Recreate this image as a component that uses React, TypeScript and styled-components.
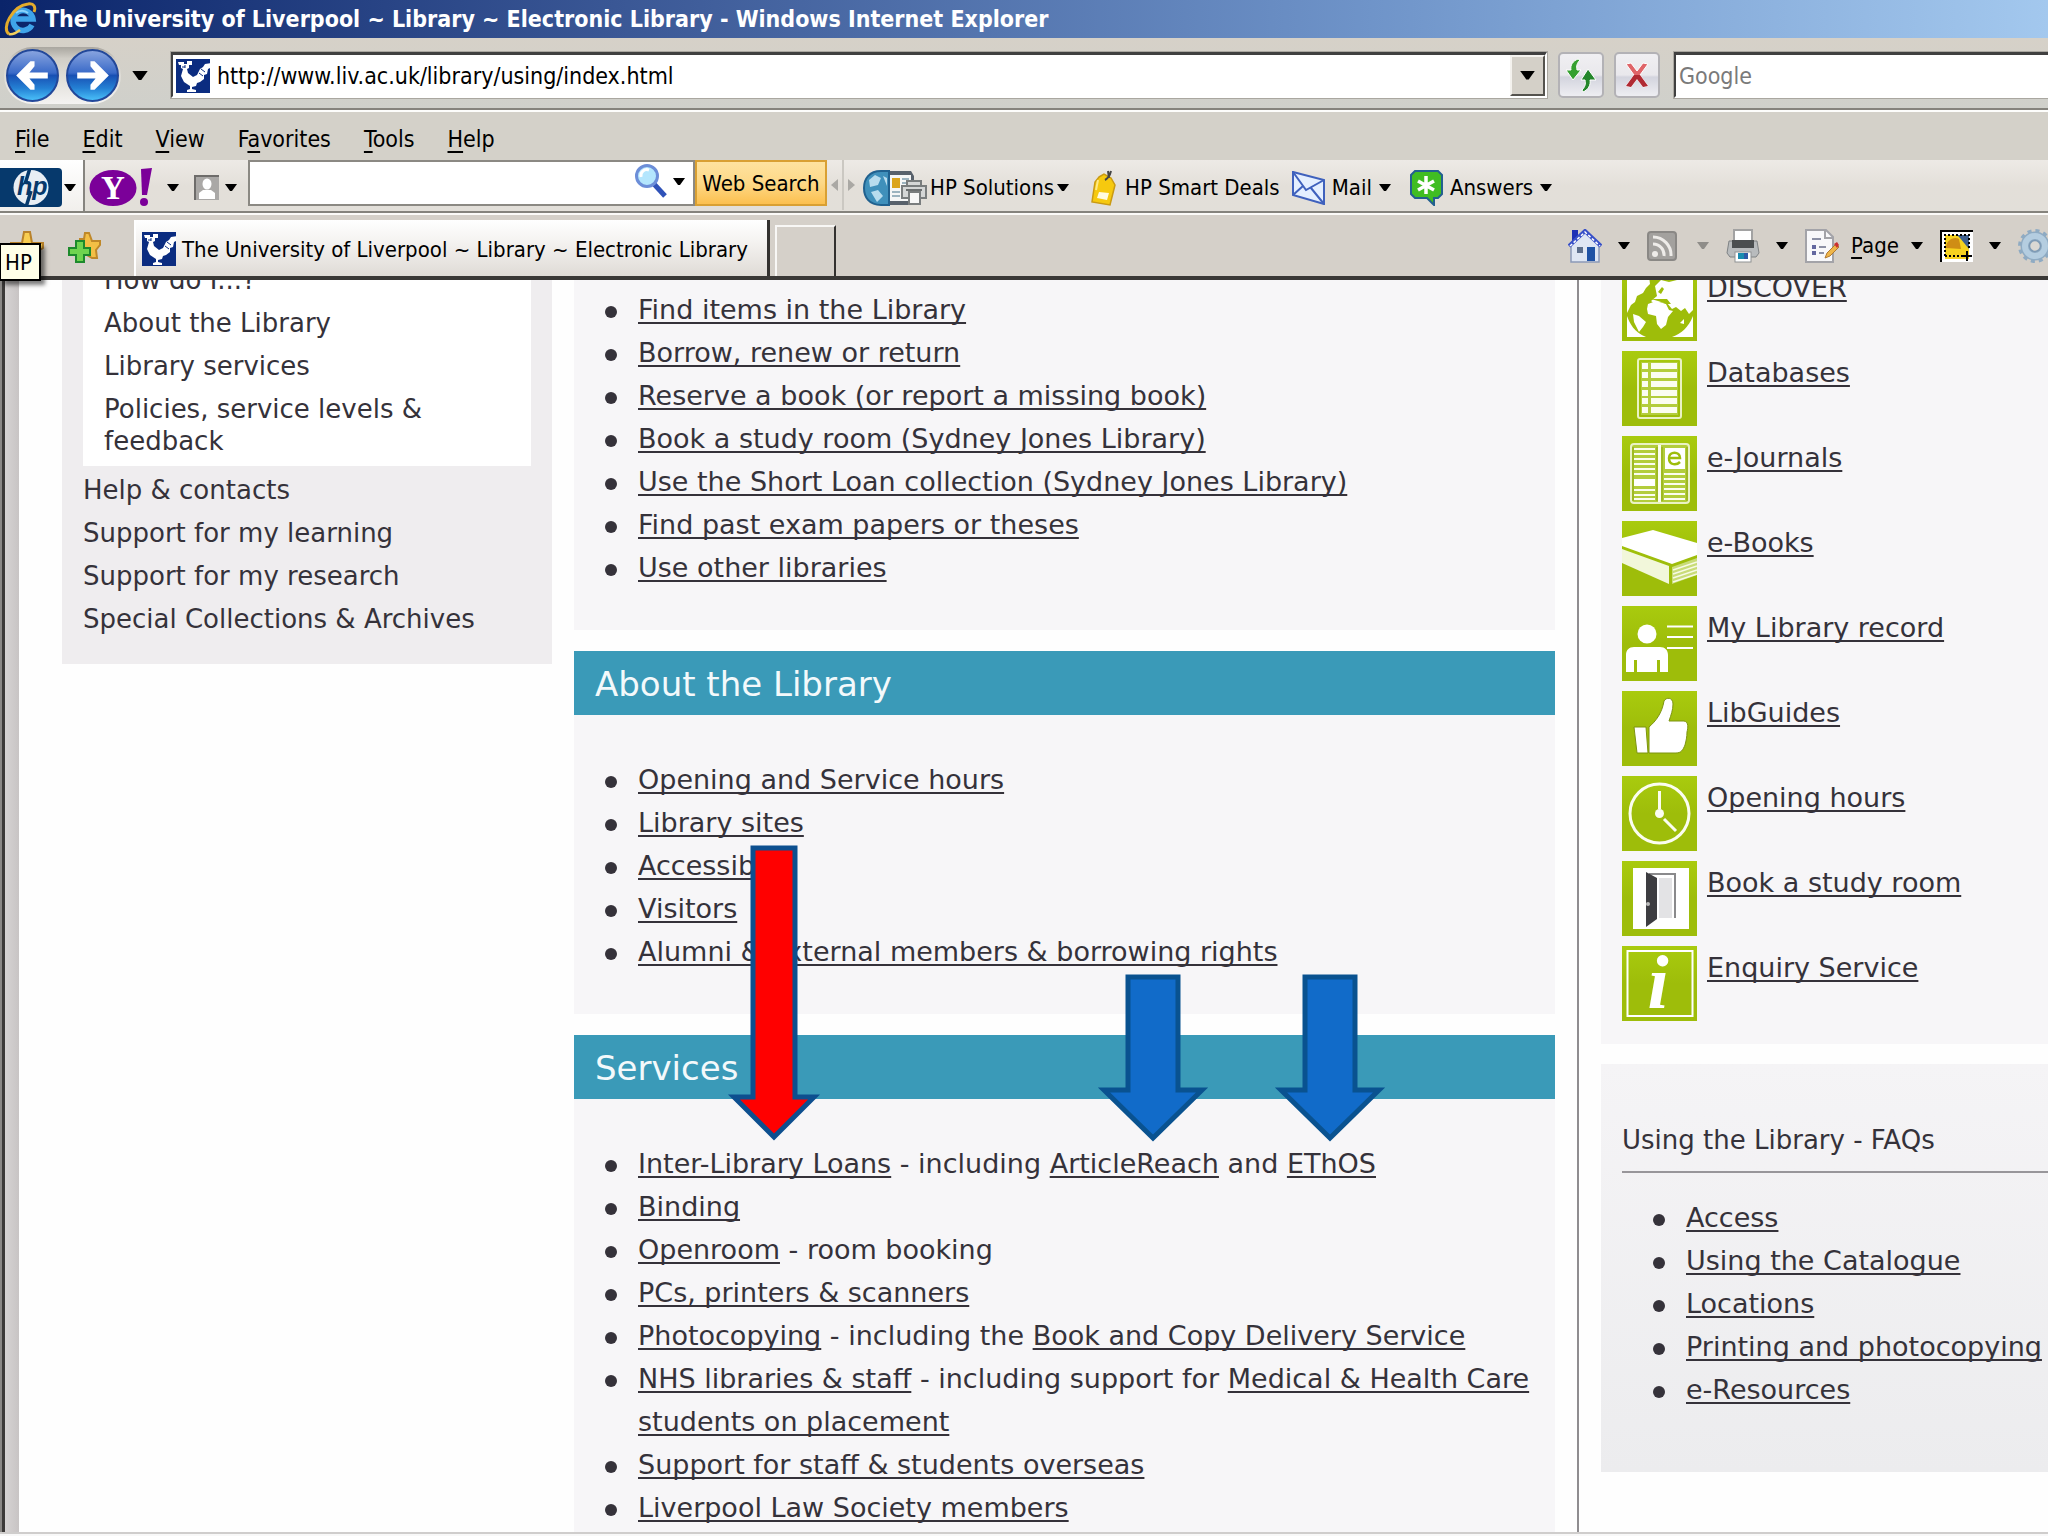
import React from "react";
import styled, { createGlobalStyle } from "styled-components";

const UI = '"DejaVu Sans Condensed", "DejaVu Sans", Tahoma, sans-serif';
const BODY = '"DejaVu Sans", Verdana, sans-serif';

const Global = createGlobalStyle`
  *, *::before, *::after { box-sizing: border-box; }
  body { margin: 0; background: #fff; font-family: ${UI}; color: #000; }
  button { font: inherit; color: inherit; background: none; border: 0; padding: 0; margin: 0; }
  ul { list-style: none; margin: 0; padding: 0; }
  svg { display: block; flex: none; }
`;

/* ---------- window chrome ---------- */

const Window = styled.div`
  position: relative;
  display: flex;
  flex-direction: column;
  height: 100vh;
  overflow: hidden;
`;

const TitleBar = styled.header`
  display: flex;
  align-items: center;
  gap: 7px;
  height: 38px;
  padding-left: 4px;
  background: linear-gradient(90deg, #0a246a, #3a5795 30%, #6f94c9 67%, #a3c8ee);
  color: #fff;
  white-space: nowrap;
`;

const Title = styled.h1`
  margin: 0;
  font-size: 23px;
  font-weight: 700;
`;

const AddressRow = styled.div`
  display: flex;
  align-items: center;
  height: 74px;
  padding-top: 2px;
  background: linear-gradient(#d6d1c8, #cfd0cb);
  border-bottom: 2px solid #fdfdfb;
  box-shadow: inset 0 -2px 0 #85837d;
`;

const NavButtons = styled.div`
  display: flex;
  align-items: center;
  gap: 7px;
  margin-left: 4px;
  padding: 2px;
  border-radius: 30px;
  background: linear-gradient(#a9a69f, #d0cdc6 20%, #d8d5ce 35%, #f4f3f1);
`;

const History = styled.button`
  display: flex;
  justify-content: center;
  width: 30px;
  margin: 0 16px 0 4px;
`;

const Field = styled.div<{ $grow?: boolean }>`
  display: flex;
  align-items: center;
  flex: ${p => (p.$grow ? "1 1 0" : "none")};
  gap: 7px;
  height: 46px;
  padding: 0 0 0 3px;
  background: #fff;
  border: 2px solid #404040;
  border-top-width: 3px;
  border-right-color: #fff;
  border-bottom-color: #fff;
  outline: 1px solid #aaa7a0;
`;

const TextInput = styled.input`
  flex: 1;
  min-width: 0;
  height: 100%;
  padding: 0;
  border: 0;
  outline: 0;
  background: transparent;
  font: 23px ${UI};
  color: #000;
  &::placeholder { color: #7a7a7a; opacity: 1; }
`;

const DropButton = styled.button`
  display: flex;
  align-items: center;
  justify-content: center;
  width: 35px;
  height: 100%;
  background: #d4d0c8;
  border: 2px solid;
  border-color: #f4f2ee #55534e #55534e #f4f2ee;
`;

const SquareButton = styled.button`
  display: flex;
  align-items: center;
  justify-content: center;
  width: 46px;
  height: 46px;
  border: 2px solid #b3b2b6;
  border-radius: 5px;
  background: linear-gradient(#f0eff2, #e9e8ec 50%, #d3d4de 55%, #eeeef2);
`;

const Commands = styled.div`
  display: flex;
  gap: 10px;
  padding: 0 14px 0 11px;
`;

const SearchField = styled(Field)`
  width: 374px;
  border-right: 0;
`;

const MenuBar = styled.nav`
  display: flex;
  align-items: center;
  gap: 33px;
  height: 48px;
  padding: 6px 0 0 15px;
  background: #d4d1c9;
  font-size: 23px;
  u { text-underline-offset: 4px; text-decoration-thickness: 2px; }
`;

const Toolbar = styled.div`
  display: flex;
  align-items: flex-start;
  height: 55px;
  background: linear-gradient(#edeae6, #e3dfd9 50%, #e2dfd9);
  border-bottom: 2px solid #fbfaf8;
  box-shadow: inset 0 -2px 0 #85837d;
  font-size: 22px;
`;

const ToolButton = styled.button<{ $gap: number }>`
  display: flex;
  align-items: center;
  gap: ${p => p.$gap}px;
  height: 52px;
  padding-top: 3px;
  white-space: nowrap;
`;

const HpSlot = styled.div`
  width: 85px;
  height: 51px;
  margin-right: 4px;
  background: linear-gradient(#fff, #f1efec);
  border-right: 2px solid #86847f;
`;

const YahooGroup = styled.div`
  display: flex;
  gap: 15px;
  margin-right: 11px;
`;

const ToolSearch = styled.div`
  display: flex;
  align-items: center;
  gap: 6px;
  width: 447px;
  height: 46px;
  padding: 0 8px 4px;
  background: #fff;
  border: 2px solid #8b8983;
`;

const WebSearch = styled.button`
  width: 132px;
  height: 46px;
  background: linear-gradient(#fee3a0, #fdd887 50%, #fcc04f);
  border: 2px solid #d9a033;
  white-space: nowrap;
`;

const Grip = styled.div`
  display: flex;
  align-items: center;
  gap: 4px;
  height: 50px;
  margin: 0 8px 0 4px;
`;

const GripLine = styled.span`
  width: 2px;
  height: 100%;
  background: #cbc8c2;
`;

const ToolLinks = styled.div<{ $gap: number }>`
  display: flex;
  gap: ${p => p.$gap}px;
  margin-right: 12px;
`;

const TabRow = styled.div`
  display: flex;
  align-items: flex-end;
  justify-content: space-between;
  height: 65px;
  background: #d5d0c9;
  border-bottom: 4px solid #3f3d3b;
  border-image: linear-gradient(#8a8884 25%, #3a3836 60%) 4;
  font-size: 22px;
`;

const TabSide = styled.div`
  display: flex;
  align-items: flex-end;
`;

const Favorites = styled.div`
  display: flex;
  align-self: center;
  gap: 24px;
  width: 134px;
  padding-left: 10px;
`;

const Tab = styled.button`
  display: flex;
  align-items: center;
  gap: 6px;
  height: 56px;
  width: 636px;
  padding: 2px 0 0 6px;
  background: linear-gradient(#fff, #f4f2f0 40%, #dfdbd6);
  border-right: 3px solid #33312f;
  border-left: 2px solid #fff;
  white-space: nowrap;
`;

const NewTab = styled.button`
  width: 61px;
  height: 51px;
  margin-left: 5px;
  border-right: 2px solid #33312f;
  border-left: 2px solid #f8f7f5;
  border-top: 2px solid #f8f7f5;
`;

const PageTools = styled.div`
  display: flex;
  align-items: center;
  align-self: center;
  gap: 17px;
  height: 44px;
  u { text-underline-offset: 4px; text-decoration-thickness: 2px; }
`;

const PageTool = styled.button<{ $w: number }>`
  display: flex;
  align-items: center;
  justify-content: space-between;
  width: ${p => p.$w}px;
`;

const Tip = styled.div`
  position: absolute;
  left: 0;
  top: 243px;
  z-index: 3;
  padding: 0 4px;
  height: 38px;
  width: 41px;
  line-height: 36px;
  font-size: 22px;
  background: #ffffe8;
  border: 2px solid #000;
  border-left-width: 1px;
  box-shadow: 4px 4px 4px rgba(0, 0, 0, 0.5);
`;

/* ---------- page ---------- */

const Viewport = styled.div`
  position: relative;
  flex: 1;
  min-height: 0;
  overflow: hidden;
  padding-left: 62px;
  background: linear-gradient(90deg, #8a8886 2px, #3c3a39 2px 5px, #d6d3d3 5px, #c8c4c4 19px, #fefefe 19px);
  color: #35323a;
  font-family: ${BODY};
  &::after {
    content: "";
    position: absolute;
    left: 0;
    right: 0;
    bottom: 0;
    height: 4px;
    background: linear-gradient(#cfcdcc 50%, #f8f8f8 50%);
  }
`;

const Columns = styled.div`
  display: grid;
  grid-template-columns: 490fr 981fr 471fr;
  align-items: start;
  gap: 22px;
`;

const SideNav = styled.nav`
  padding: 0 21px 29px;
  background: #efedef;
  font-size: 26px;
  line-height: 32px;
`;

const NavList = styled.ul`
  display: flex;
  flex-direction: column;
  gap: 11px;
`;

const SubNav = styled(NavList)`
  margin-top: -16px;
  margin-bottom: 8px;
  padding: 0 21px 9px;
  background: #fff;
`;

const NavLink = styled.a`
  color: inherit;
  text-decoration: none;
`;

const Main = styled.main`
  display: flex;
  flex-direction: column;
  gap: 21px;
`;

const Heading = styled.h2`
  margin: 0;
  height: 64px;
  padding-left: 21px;
  line-height: 66px;
  font-size: 34px;
  font-weight: 400;
  color: #f3f9fb;
  background: #3a9ab8;
`;

const Bullets = styled.ul<{ $top: number }>`
  padding: ${p => p.$top}px 20px 41px 64px;
  background: #f7f6f8;
  font-size: 27px;
  line-height: 43px;
  li { position: relative; }
  li::before {
    content: "";
    position: absolute;
    left: -33px;
    top: 18px;
    width: 12px;
    height: 12px;
    border-radius: 50%;
    background: #35323a;
  }
`;

const Link = styled.a`
  color: inherit;
  text-decoration: underline;
  text-decoration-thickness: 2px;
  text-underline-offset: 3px;
  text-decoration-skip-ink: none;
`;

const CoveredLink = styled(Link)`
  display: inline-block;
  max-width: 150px;
  overflow: hidden;
  vertical-align: top;
`;

const Aside = styled.aside`
  display: flex;
  flex-direction: column;
  gap: 20px;
  height: 1256px;
  padding-left: 22px;
  border-left: 2px solid #8f8d90;
`;

const QuickLinks = styled.ul`
  display: flex;
  flex-direction: column;
  gap: 10px;
  margin-top: -14px;
  padding: 0 0 23px 21px;
  background: #f7f6f8;
  font-size: 27px;
  line-height: 43px;
  li { display: flex; gap: 10px; white-space: nowrap; }
`;

const Faq = styled.section`
  padding: 52px 0 44px 21px;
  background: linear-gradient(#f5f4f6, #ececee);
`;

const FaqTitle = styled.h3`
  margin: 0;
  height: 57px;
  line-height: 48px;
  font-size: 26px;
  font-weight: 400;
  border-bottom: 2px solid #98969a;
  white-space: nowrap;
`;

const FaqList = styled(Bullets)`
  padding-right: 0;
  padding-bottom: 17px;
  background: none;
  white-space: nowrap;
`;

const Callout = styled.svg<{ $x: number; $y: number }>`
  position: absolute;
  left: ${p => p.$x}px;
  top: ${p => p.$y}px;
  z-index: 2;
`;

/* ---------- icons ---------- */

const Caret = ({ c = "#000", w = 12 }: { c?: string; w?: number }) => (
  <svg width={w} height={w / 2 + 1} viewBox="0 0 12 7"><path d="M0 0H12L7 7H5Z" fill={c} /></svg>
);

const Crest = () => (
  <svg width="34" height="34" viewBox="0 0 34 34">
    <rect width="34" height="34" fill="#0b2c80" />
    <path d="M2 3h6v2h3V2h5v4h-3v3l-2 1 1 4 5 4 4-2 3-6 3-2 2-3 6-1-1 5-2 1-1 5-3 1v4l-4 3-3 1-1 3-4 1v2l4 1v2H11v-2l3-1v-3l-3-2-3-2-3-6 2-7-2-1V6H3z" fill="#fff" />
    <path d="M6 8h3M9 6v3M25 10l4 3M23 14l4 3" stroke="#0b2c80" strokeWidth="1" />
  </svg>
);

const Explorer = () => (
  <svg width="34" height="36" viewBox="0 0 34 36">
    <path d="M28 24A10 10 0 1 1 29 18H11" fill="none" stroke="#3fa4ea" strokeWidth="5.5" />
    <path d="M12 12a9 9 0 0 1 12 0" fill="none" stroke="#8ad2fa" strokeWidth="2" />
    <path d="M5 33C-3 28 8 5 24 3c6-1 8 3 6 8" fill="none" stroke="#e3ab2c" strokeWidth="3" />
    <path d="M5 33c3 1 7-1 11-4" fill="none" stroke="#f3cf5c" strokeWidth="2.5" />
  </svg>
);

const Round = ({ flip }: { flip?: boolean }) => (
  <svg width="53" height="53" viewBox="0 0 52 52">
    <defs>
      <linearGradient id="orb" x1="0" y1="0" x2="0" y2="1">
        <stop offset="0" stopColor="#8ba6e0" /><stop offset=".45" stopColor="#3a6ac8" />
        <stop offset=".5" stopColor="#1850b4" /><stop offset=".75" stopColor="#2480d4" /><stop offset="1" stopColor="#4cc4fb" />
      </linearGradient>
    </defs>
    <circle cx="26" cy="26" r="25" fill="url(#orb)" stroke="#23489a" strokeWidth="2" />
    <g transform={flip ? "matrix(-1 0 0 1 52 0)" : undefined}>
      <path d="M10 26L24 12h4v5l-5 6h18v6H23l5 6v5h-4Z" fill="#fff" />
    </g>
  </svg>
);

const Refresh = () => (
  <svg width="34" height="38" viewBox="0 0 34 38">
    <path d="M14 3C9 5 6 9 7 14H2l7 10 8-10h-4c-1-4 0-7 3-10z" fill="#35a02f" stroke="#fff" strokeWidth="1" />
    <path d="M19 36c5-2 8-7 7-12h6l-8-11-7 11h4c1 4 0 7-3 10z" fill="#23862a" stroke="#fff" strokeWidth="1" />
  </svg>
);

const Stop = () => (
  <svg width="30" height="34" viewBox="0 0 30 34">
    <path d="M4 6l5-1 6 8 6-8 5 1-8 11 8 11-5 1-6-8-6 8-5-1 8-11z" fill="#df6468" stroke="#fff" strokeWidth="1" />
    <path d="M12 17l-8 11 5 1 6-8 6 8 5-1-8-11z" fill="#b02a33" />
  </svg>
);

const HpLogo = () => (
  <svg width="62" height="39" viewBox="0 0 62 39">
    <rect x="-6" width="68" height="39" rx="4" fill="#06396c" />
    <circle cx="31" cy="19.500" r="17.500" fill="#e8eef4" />
    <text x="17" y="27" fontFamily="Liberation Sans, sans-serif" fontStyle="italic" fontWeight="700" fontSize="25" fill="#06396c">hp</text>
    <path d="M30 0L25 16M31 23l-5 16" stroke="#06396c" strokeWidth="3.500" />
  </svg>
);

const Yahoo = () => (
  <svg width="64" height="39" viewBox="0 0 64 39">
    <ellipse cx="24" cy="20" rx="23.500" ry="18" fill="#7b0099" />
    <text x="24" y="31" textAnchor="middle" fontFamily="Liberation Serif, serif" fontWeight="700" fontSize="33" fill="#fff">Y</text>
    <path d="M52 1l11-1-5 27h-5z" fill="#7b0099" /><circle cx="55" cy="34" r="4" fill="#7b0099" />
  </svg>
);

const Person = () => (
  <svg width="25" height="25" viewBox="0 0 25 25">
    <rect width="25" height="25" fill="#aaa8a6" /><path d="M1 25V1h24" fill="none" stroke="#6e6c6a" strokeWidth="2" />
    <ellipse cx="13" cy="9" rx="4.500" ry="5.500" fill="#fff" /><path d="M5 24v-6l4-3h8l4 3v6z" fill="#fff" />
  </svg>
);

const Magnifier = () => (
  <svg width="33" height="34" viewBox="0 0 33 34">
    <path d="M20 20l11 12" stroke="#2f52b8" strokeWidth="5" />
    <circle cx="13" cy="12" r="10.500" fill="#b4e6fd" stroke="#6c8ed8" strokeWidth="3" />
    <path d="M7 13a6 6 0 0 1 8-7" fill="none" stroke="#fff" strokeWidth="3" />
  </svg>
);

const Solutions = () => (
  <svg width="64" height="36" viewBox="0 0 64 36">
    <path d="M20 1h28l3 5v29H20z" fill="#58616b" />
    <path d="M18 1C6 1 1 9 1 18s5 17 17 17h8V1z" fill="#3f90bb" stroke="#20618f" strokeWidth="2" />
    <path d="M6 10l6-5 6 3-3 7-8 2zM8 22l7-2 5 6-6 6zM20 6l4 2v8z" fill="#b7dcee" />
    <rect x="27" y="5" width="21" height="26" fill="#f5f6f6" />
    <rect x="29" y="8" width="8" height="10" fill="#dba41c" />
    <path d="M39 9h7M39 13h7M29 22h8M29 26h8" stroke="#9bb3bf" strokeWidth="2" />
    <path d="M44 11h14v5h-14zM39 16h24v12h-24z" fill="#d4d6d6" stroke="#797d7e" strokeWidth="2" />
    <path d="M43 20h16" stroke="#6b6f70" strokeWidth="2" /><path d="M46 22h11v12H46z" fill="#f7f7f7" stroke="#797d7e" strokeWidth="2" />
  </svg>
);

const Tag = () => (
  <svg width="25" height="36" viewBox="0 0 25 36">
    <path d="M8 7l5-3 7 4 4 7-5 20-18-3 3-20z" fill="#f6c90f" stroke="#c99a13" strokeWidth="1.500" />
    <path d="M8 22l10 1-2 7-10-2z" fill="#fffbe0" /><path d="M14 10c4-2 5-5 6-9M17 1l1 7" fill="none" stroke="#444" strokeWidth="2" />
    <path d="M7 10l-2 10" stroke="#ffe985" strokeWidth="2" />
  </svg>
);

const Mail = () => (
  <svg width="33" height="34" viewBox="0 0 33 34">
    <path d="M1 1l31 8v24L1 24z" fill="#e4efff" stroke="#3f61bd" strokeWidth="2" />
    <path d="M1 1l13 18L32 9M1 24l10-9M32 33L19 17" fill="none" stroke="#3f61bd" strokeWidth="2" />
  </svg>
);

const Answers = () => (
  <svg width="33" height="36" viewBox="0 0 33 36">
    <path d="M5 1h23l4 4v19l-4 4h-4v7l-7-7H5l-4-4V5z" fill="#40bd22" stroke="#23608f" strokeWidth="2" />
    <path d="M16 6v18M8 11l16 9M24 11L8 20" stroke="#fff" strokeWidth="3.500" />
  </svg>
);

const Star = () => (
  <svg width="34" height="34" viewBox="0 0 34 34">
    <path d="M14 1h6l2 11h11v5l-8 5 3 11-11-6-11 6 3-11-8-5v-5h11z" fill="#f8cd50" stroke="#b9822a" strokeWidth="2" />
  </svg>
);

const AddStar = () => (
  <svg width="34" height="34" viewBox="0 0 34 34">
    <path d="M17 2h4l3 8h8v4l-4 5 1 8h-5l-5-3-7-10V8h4z" fill="#f3bf45" stroke="#bf8829" strokeWidth="2" />
    <path d="M8 10h8v7h6v7h-6v7H8v-7H1v-7h7z" fill="#6fd44f" stroke="#1d8a2c" strokeWidth="2" />
  </svg>
);

const Home = () => (
  <svg width="34" height="34" viewBox="0 0 34 34">
    <path d="M3 15L17 2l14 13v18H3z" fill="#dfe6f3" stroke="#8c99b8" strokeWidth="1.500" />
    <path d="M4 1h6v8l-6 4z" fill="#1d2fb5" /><path d="M1 17L17 2l16 15" fill="none" stroke="#3850c8" strokeWidth="4" />
    <path d="M2 17L17 3l15 14" fill="none" stroke="#fff" strokeWidth="1.500" strokeDasharray="3 2" />
    <rect x="9" y="18" width="6" height="6" fill="#5c6e8c" /><rect x="19" y="18" width="8" height="14" fill="#1f52a5" />
  </svg>
);

const Rss = () => (
  <svg width="30" height="30" viewBox="0 0 30 30">
    <rect x="1" y="1" width="28" height="28" rx="3" fill="#a3a19e" stroke="#8a8885" strokeWidth="2" />
    <circle cx="8" cy="23" r="3" fill="#eeece9" />
    <path d="M6 13a11 11 0 0 1 11 12M6 6a18 18 0 0 1 18 19" fill="none" stroke="#eeece9" strokeWidth="3" />
  </svg>
);

const Printer = () => (
  <svg width="34" height="34" viewBox="0 0 34 34">
    <rect x="8" y="1" width="18" height="13" fill="#fff" stroke="#a2a2a2" strokeWidth="2" />
    <path d="M3 12h28l2 12-3 4H4l-3-4z" fill="#b8bbbd" stroke="#7f8284" strokeWidth="1" />
    <path d="M6 11h22v8H6z" fill="#4b4e50" /><rect x="9" y="23" width="16" height="10" fill="#fff" stroke="#8f9294" />
    <path d="M12 24h6v6h-6z" fill="#1a8cb0" /><path d="M18 24h4v6h-4z" fill="#2e5aa8" />
  </svg>
);

const PageIcon = () => (
  <svg width="34" height="34" viewBox="0 0 34 34">
    <path d="M1 1h20l7 7v25H1z" fill="#f8f8fa" stroke="#a3a3a8" strokeWidth="2" />
    <path d="M20 1v8h8" fill="none" stroke="#a3a3a8" strokeWidth="2" />
    <path d="M7 10h9M14 18h7M14 24h5" stroke="#8c90a5" strokeWidth="2" /><path d="M7 16h4v4H7zM7 22h4v4H7z" fill="#6468a0" />
    <path d="M20 29l2-5 9-9 3 3-9 9z" fill="#efb64a" stroke="#b07930" /><path d="M29 15l3-2 2 3-2 3z" fill="#cb3030" />
  </svg>
);

const Picture = () => (
  <svg width="33" height="32" viewBox="0 0 33 32">
    <rect width="33" height="32" fill="#fff" /><path d="M1 32V1h32" fill="none" stroke="#000" strokeWidth="2" />
    <rect x="5" y="5" width="24" height="24" fill="#f6d21f" /><path d="M29 5v14L20 8l-3-3z" fill="#40618e" />
    <path d="M6 18c0-8 8-12 13-9l2 10z" fill="#cf8d15" />
    <path d="M5 26V5h24v14M5 26h17" fill="none" stroke="#000" strokeWidth="2" strokeDasharray="2 2" />
    <path d="M27 21v10M22 26h10" stroke="#000" strokeWidth="2" />
  </svg>
);

const Gear = () => (
  <svg width="34" height="36" viewBox="0 0 34 36">
    <circle cx="17" cy="18" r="15" fill="none" stroke="#8fabc3" strokeWidth="4" strokeDasharray="4 3.850" />
    <circle cx="17" cy="18" r="10" fill="none" stroke="#8fabc3" strokeWidth="9" />
    <circle cx="17" cy="18" r="10" fill="none" stroke="#b4cde0" strokeWidth="6" />
    <circle cx="17" cy="18" r="5.500" fill="#dad8d3" stroke="#7d9ab5" strokeWidth="1.500" />
  </svg>
);

const Tile = ({ children }: { children: React.ReactNode }) => (
  <svg width="75" height="75" viewBox="0 0 75 75">
    <defs>
      <linearGradient id="lime" x1="0" y1="0" x2="0" y2="1"><stop offset="0" stopColor="#a9cb0e" /><stop offset=".5" stopColor="#9ebd0a" /></linearGradient>
    </defs>
    <rect width="75" height="75" fill="url(#lime)" />
    {children}
  </svg>
);

const tiles: Record<string, React.ReactNode> = {
  globe: <>
    <rect x="5" y="5" width="66" height="66" fill="#fff" />
    <path d="M5 5h66v45C66 62 60 67 50 71H24C12 66 8 58 5 50z" fill="#9ebd0a" />
    <path d="M5 10h22l1 8-4 4-3 5-6 3-2 6-4 3-4 8zM14 12l5 0z" fill="#fff" />
    <path d="M33 20l6-6 8 2 24-6v34l-4 4-4-6-4 3-5-4-4 2-5-6-8-1-4 2-4-3 6-5z" fill="#fff" />
    <path d="M26 38l8-3 10 3 3 6 4 1-5 6-2 8-5 4-4-5-1-8-8-2-1-5z" fill="#fff" />
    <path d="M11 48l6 2 7 6-3 5-4 5-5-10zM58 57l4-4v5zM18 16l4 3-3 2z" fill="#fff" />
    <path d="M36 26l4-5 2 2-3 5zM29 33l16 0 4 5-4 0-9-3z" fill="#9ebd0a" />
  </>,
  list: <>
    <rect x="16" y="8" width="43" height="59" rx="2" fill="none" stroke="#eaf2c4" strokeWidth="2" />
    <rect x="19" y="11" width="37" height="53" fill="#b3cd3c" />
    {[12, 21, 30, 39, 47, 56].map(y => <g key={y} fill="#fbfdf0"><rect x="20" y={y} width="6" height="6" /><rect x="29" y={y} width="26" height="6" /></g>)}
  </>,
  journal: <>
    <rect x="9" y="8" width="58" height="59" rx="3" fill="#b3cd3c" stroke="#eaf2c4" strokeWidth="2" />
    <path d="M37.500 9v57" stroke="#fbfdf0" strokeWidth="3" />
    {[12, 17, 22, 27, 32, 37, 53, 58, 62].map(y => <rect key={y} x="12" y={y} width="21" height="2" fill="#fbfdf0" />)}
    {[37, 42, 47, 52, 57, 62].map(y => <rect key={y} x="42" y={y} width="21" height="2" fill="#fbfdf0" />)}
    <rect x="12" y="43" width="21" height="7" fill="#fff" />
    <rect x="43" y="12" width="20" height="21" fill="#fff" />
    <path d="M47 22h11c0-7-11-7-11 0 0 8 8 7 11 4" fill="none" stroke="#9ebd0a" strokeWidth="2.500" />
    <path d="M11 11v54M35 11v54M40 11v54M65 11v54" stroke="#8aa60a" strokeWidth="1" />
  </>,
  book: <>
    <path d="M0 17L31 9l44 13v12L50 43 0 25z" fill="#fff" />
    <path d="M0 28l47 17v18L0 42z" fill="#f2f7da" />
    <path d="M50 46l25-9v17L50 63z" fill="#c9dc78" />
    <path d="M51 49l24-8M51 53l24-8M51 57l24-8M51 61l24-8" stroke="#f7fae6" strokeWidth="1.500" />
  </>,
  record: <>
    <circle cx="25" cy="28" r="9.500" fill="#fff" />
    <path d="M4 66V49c0-5 3-8 8-8h26c5 0 8 3 8 8v17h-8V54h-3v12H15V54h-3v12z" fill="#fff" />
    <path d="M45 20.500h26M45 31h26M45 42h26" stroke="#fff" strokeWidth="2" />
  </>,
  thumb: <>
    <path d="M12 36h12l2 26H15z" fill="#fff" stroke="#7d9410" strokeWidth="1" />
    <path d="M27 36c7-6 13-14 15-26 2-4 9-4 9 3 0 6-2 11-4 17h15c5 1 4 7 3 11 0 5-1 9-2 13-2 5-4 8-9 8H27z" fill="#fff" stroke="#7d9410" strokeWidth="1" />
  </>,
  clock: <>
    <circle cx="37.500" cy="37.500" r="29.500" fill="none" stroke="#fbfdf0" strokeWidth="3" />
    <path d="M37.500 15v18M42 43l12 12" stroke="#fbfdf0" strokeWidth="3" /><circle cx="37.500" cy="37.500" r="4.500" fill="#fbfdf0" />
  </>,
  door: <>
    <rect x="11" y="7" width="56" height="61" fill="#fff" />
    <path d="M27 13h26v44" fill="none" stroke="#8a8a8c" strokeWidth="2" /><rect x="37" y="17" width="13" height="40" fill="#e3e3e5" />
    <path d="M24 11l11 6v41l-11 8z" fill="#3d3d41" /><circle cx="26" cy="43" r="2" fill="#bbb" />
  </>,
  info: <>
    <rect x="5.500" y="5" width="65" height="65" fill="none" stroke="#fff" strokeWidth="2" />
    <text x="36" y="62" textAnchor="middle" fontFamily="Liberation Serif, serif" fontStyle="italic" fontWeight="700" fontSize="76" fill="#fff">i</text>
  </>,
};

const QUICK: [string, string][] = [
  ["globe", "DISCOVER"], ["list", "Databases"], ["journal", "e-Journals"], ["book", "e-Books"], ["record", "My Library record"],
  ["thumb", "LibGuides"], ["clock", "Opening hours"], ["door", "Book a study room"], ["info", "Enquiry Service"],
];

const A = ({ children }: { children: React.ReactNode }) => <Link href="#">{children}</Link>;

const Items = ({ items }: { items: string[] }) => <>{items.map(t => <li key={t}><A>{t}</A></li>)}</>;

export default function App() {
  return (
    <Window>
      <Global />
      <TitleBar>
        <Explorer />
        <Title>The University of Liverpool ~ Library ~ Electronic Library - Windows Internet Explorer</Title>
      </TitleBar>

      <AddressRow>
        <NavButtons>
          <button aria-label="Back"><Round /></button>
          <button aria-label="Forward"><Round flip /></button>
        </NavButtons>
        <History aria-label="Recent pages"><Caret w={16} /></History>
        <Field $grow>
          <Crest />
          <TextInput aria-label="Address" defaultValue="http://www.liv.ac.uk/library/using/index.html" />
          <DropButton aria-label="Show addresses"><Caret w={15} /></DropButton>
        </Field>
        <Commands>
          <SquareButton aria-label="Refresh"><Refresh /></SquareButton>
          <SquareButton aria-label="Stop"><Stop /></SquareButton>
        </Commands>
        <SearchField>
          <TextInput aria-label="Search" placeholder="Google" />
        </SearchField>
      </AddressRow>

      <MenuBar>
        <button><u>F</u>ile</button>
        <button><u>E</u>dit</button>
        <button><u>V</u>iew</button>
        <button>F<u>a</u>vorites</button>
        <button><u>T</u>ools</button>
        <button><u>H</u>elp</button>
      </MenuBar>

      <Toolbar>
        <HpSlot><ToolButton $gap={2} aria-label="HP"><HpLogo /><Caret /></ToolButton></HpSlot>
        <YahooGroup>
          <ToolButton $gap={14} aria-label="Yahoo"><Yahoo /><Caret /></ToolButton>
          <ToolButton $gap={6} aria-label="Profile"><Person /><Caret /></ToolButton>
        </YahooGroup>
        <ToolSearch>
          <TextInput aria-label="Web search terms" />
          <Magnifier /><Caret />
        </ToolSearch>
        <WebSearch>Web Search</WebSearch>
        <Grip>
          <svg width="7" height="12" viewBox="0 0 7 12"><path d="M7 0v12L0 6z" fill="#aaa8a4" /></svg>
          <GripLine />
          <svg width="7" height="12" viewBox="0 0 7 12"><path d="M0 0v12l7-6z" fill="#aaa8a4" /></svg>
        </Grip>
        <ToolLinks $gap={22}>
          <ToolButton $gap={3}><Solutions />HP Solutions<Caret /></ToolButton>
          <ToolButton $gap={9}><Tag />HP Smart Deals</ToolButton>
        </ToolLinks>
        <ToolLinks $gap={19}>
          <ToolButton $gap={7}><Mail />Mail<Caret /></ToolButton>
          <ToolButton $gap={7}><Answers />Answers<Caret /></ToolButton>
        </ToolLinks>
      </Toolbar>

      <TabRow>
        <TabSide>
          <Favorites>
            <button aria-label="Favorites Center"><Star /></button>
            <button aria-label="Add to Favorites"><AddStar /></button>
          </Favorites>
          <Tab><Crest />The University of Liverpool ~ Library ~ Electronic Library</Tab>
          <NewTab aria-label="New Tab" />
        </TabSide>
        <PageTools>
          <PageTool $w={62} aria-label="Home"><Home /><Caret /></PageTool>
          <PageTool $w={62} aria-label="Feeds"><Rss /><Caret c="#8f8d89" /></PageTool>
          <PageTool $w={62} aria-label="Print"><Printer /><Caret /></PageTool>
          <PageTool $w={118}><PageIcon /><span><u>P</u>age</span><Caret /></PageTool>
          <PageTool $w={61} aria-label="Capture"><Picture /><Caret /></PageTool>
          <PageTool $w={30} aria-label="Tools"><Gear /></PageTool>
        </PageTools>
      </TabRow>

      <Viewport>
        <Columns>
          <SideNav>
            <SubNav>
              {["How do I...?", "About the Library", "Library services", "Policies, service levels & feedback"].map(t => (
                <li key={t}><NavLink href="#">{t}</NavLink></li>
              ))}
            </SubNav>
            <NavList>
              {["Help & contacts", "Support for my learning", "Support for my research", "Special Collections & Archives"].map(t => (
                <li key={t}><NavLink href="#">{t}</NavLink></li>
              ))}
            </NavList>
          </SideNav>

          <Main>
            <section>
              <Bullets $top={8}>
                <Items items={[
                  "Find items in the Library", "Borrow, renew or return", "Reserve a book (or report a missing book)",
                  "Book a study room (Sydney Jones Library)", "Use the Short Loan collection (Sydney Jones Library)",
                  "Find past exam papers or theses", "Use other libraries",
                ]} />
              </Bullets>
            </section>
            <section>
              <Heading>About the Library</Heading>
              <Bullets $top={43}>
                <Items items={["Opening and Service hours", "Library sites"]} />
                <li><CoveredLink href="#">Accessibility</CoveredLink></li>
                <Items items={["Visitors", "Alumni & external members & borrowing rights"]} />
              </Bullets>
            </section>
            <section>
              <Heading>Services</Heading>
              <Bullets $top={43}>
                <li><A>Inter-Library Loans</A> - including <A>ArticleReach</A> and <A>EThOS</A></li>
                <li><A>Binding</A></li>
                <li><A>Openroom</A> - room booking</li>
                <li><A>PCs, printers & scanners</A></li>
                <li><A>Photocopying</A> - including the <A>Book and Copy Delivery Service</A></li>
                <li><A>NHS libraries & staff</A> - including support for <A>Medical & Health Care students on placement</A></li>
                <li><A>Support for staff & students overseas</A></li>
                <li><A>Liverpool Law Society members</A></li>
              </Bullets>
            </section>
          </Main>

          <Aside>
            <QuickLinks>
              {QUICK.map(([icon, label]) => (
                <li key={label}><Tile>{tiles[icon]}</Tile><A>{label}</A></li>
              ))}
            </QuickLinks>
            <Faq>
              <FaqTitle>Using the Library - FAQs</FaqTitle>
              <FaqList $top={23}>
                <Items items={["Access", "Using the Catalogue", "Locations", "Printing and photocopying", "e-Resources"]} />
              </FaqList>
            </Faq>
          </Aside>
        </Columns>

        <Callout $x={727} $y={564} width="94" height="300" viewBox="0 0 94 300">
          <path d="M26 4H68V253H87L47 293L7 253H26Z" fill="#f00" stroke="#0d4f8f" strokeWidth="5" />
        </Callout>
        <Callout $x={1097} $y={693} width="112" height="170" viewBox="0 0 112 170">
          <path d="M31 4H81V117H105L56 165L7 117H31Z" fill="#116bc9" stroke="#095290" strokeWidth="5" />
        </Callout>
        <Callout $x={1274} $y={693} width="112" height="170" viewBox="0 0 112 170">
          <path d="M31 4H81V117H105L56 165L7 117H31Z" fill="#116bc9" stroke="#095290" strokeWidth="5" />
        </Callout>
      </Viewport>
      <Tip role="tooltip">HP</Tip>
    </Window>
  );
}
